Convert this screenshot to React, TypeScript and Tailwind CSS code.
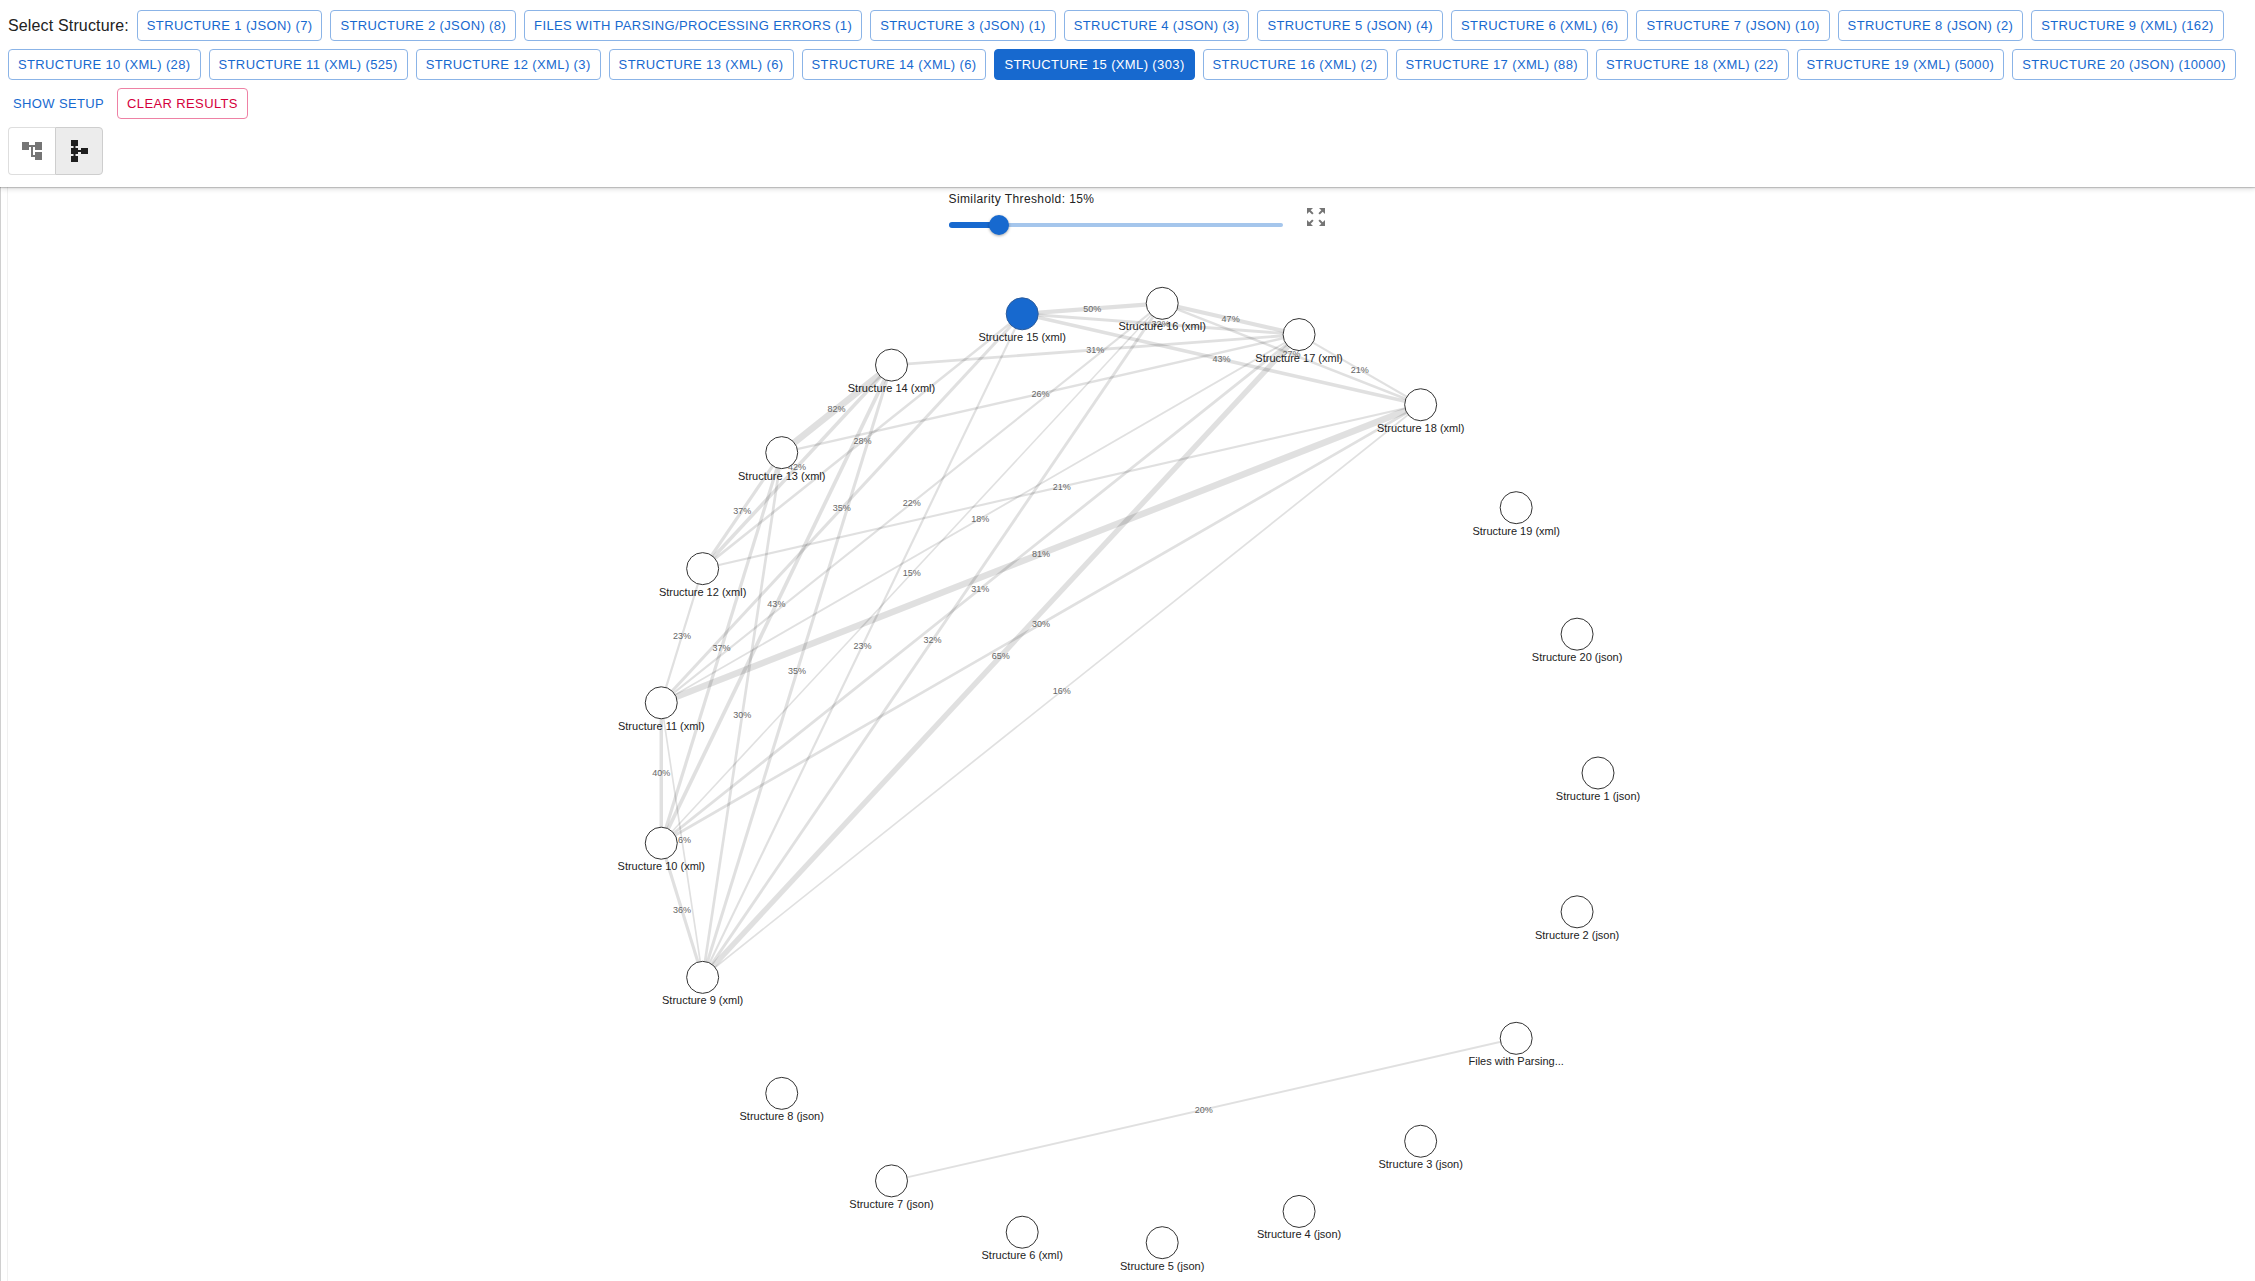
import { useState } from "react";

const structures = [
  { name: "Structure 1 (json)", count: 7 },
  { name: "Structure 2 (json)", count: 8 },
  { name: "Files with Parsing/Processing Errors", short: "Files with Parsing...", count: 1 },
  { name: "Structure 3 (json)", count: 1 },
  { name: "Structure 4 (json)", count: 3 },
  { name: "Structure 5 (json)", count: 4 },
  { name: "Structure 6 (xml)", count: 6 },
  { name: "Structure 7 (json)", count: 10 },
  { name: "Structure 8 (json)", count: 2 },
  { name: "Structure 9 (xml)", count: 162 },
  { name: "Structure 10 (xml)", count: 28 },
  { name: "Structure 11 (xml)", count: 525 },
  { name: "Structure 12 (xml)", count: 3 },
  { name: "Structure 13 (xml)", count: 6 },
  { name: "Structure 14 (xml)", count: 6 },
  { name: "Structure 15 (xml)", count: 303 },
  { name: "Structure 16 (xml)", count: 2 },
  { name: "Structure 17 (xml)", count: 88 },
  { name: "Structure 18 (xml)", count: 22 },
  { name: "Structure 19 (xml)", count: 5000 },
  { name: "Structure 20 (json)", count: 10000 },
];

// [source index, target index, similarity in percent]
const links: [number, number, number][] = [
  [2, 7, 20],
  [9, 10, 36],
  [9, 11, 16],
  [9, 13, 30],
  [9, 14, 35],
  [9, 15, 23],
  [9, 16, 32],
  [9, 17, 65],
  [9, 18, 16],
  [10, 11, 40],
  [10, 13, 37],
  [10, 14, 43],
  [10, 16, 15],
  [10, 17, 31],
  [10, 18, 30],
  [11, 12, 23],
  [11, 15, 35],
  [11, 16, 22],
  [11, 17, 18],
  [11, 18, 81],
  [12, 13, 37],
  [12, 14, 42],
  [12, 15, 28],
  [12, 18, 21],
  [13, 14, 82],
  [13, 17, 26],
  [14, 17, 31],
  [15, 16, 50],
  [15, 17, 32],
  [15, 18, 43],
  [16, 17, 47],
  [16, 18, 27],
  [17, 18, 21],
];

const WIDTH = 1100;
const HEIGHT = 1032;
const RADIUS = 471;
const NODE = 16;

const points = structures.map((_, i) => {
  const a = (i * 2 * Math.PI) / structures.length;
  return { x: WIDTH / 2 + RADIUS * Math.cos(a), y: HEIGHT / 2 + RADIUS * Math.sin(a) };
});

function Graph({ selected, threshold, onSelect }: { selected: number; threshold: number; onSelect: (i: number) => void }) {
  const visible = links.filter((l) => l[2] >= threshold);
  return (
    <svg width={WIDTH} height={HEIGHT} viewBox={`0 0 ${WIDTH} ${HEIGHT}`} className="mt-[22px] block shrink-0" role="img" aria-label="Structure similarity graph">
      {visible.map(([a, b, s]) => (
        <g key={`${a}-${b}`}>
          <line x1={points[a].x} y1={points[a].y} x2={points[b].x} y2={points[b].y} stroke="#000" strokeOpacity={0.12} strokeWidth={0.5 + (s / 100) * 7.5} />
          <text x={(points[a].x + points[b].x) / 2} y={(points[a].y + points[b].y) / 2 + 3} textAnchor="middle" fill="#666" className="text-[9px]">
            {s}%
          </text>
        </g>
      ))}
      {structures.map((n, i) => (
        <g key={n.name} className="cursor-pointer" onClick={() => onSelect(i)}>
          <circle cx={points[i].x} cy={points[i].y} r={NODE} fill={i === selected ? "#1769cf" : "#fff"} stroke={i === selected ? "#2c5c9c" : "#333"} strokeWidth={1} />
          <text x={points[i].x} y={points[i].y + 27} textAnchor="middle" fill="#222" className="text-[11px]">
            {n.short ?? n.name}
          </text>
        </g>
      ))}
    </svg>
  );
}

export default function App() {
  const [selected, setSelected] = useState(15);
  const [threshold, setThreshold] = useState(15);
  const [view, setView] = useState("graph");
  const button = "h-[31px] rounded border px-[9px] text-[13px] tracking-[0.02857em] uppercase whitespace-nowrap";

  return (
    <div className="flex h-screen flex-col overflow-hidden bg-white font-['Liberation_Sans',sans-serif] text-[#222]">
      <header className="relative z-10 bg-white px-2 pt-[10px] pb-3 shadow-[0_1px_1px_rgba(0,0,0,0.18),0_2px_5px_rgba(0,0,0,0.14)]">
        <div className="flex flex-wrap items-center gap-2">
          <h1 className="text-base leading-6 tracking-[0.00938em]">Select Structure:</h1>
          {structures.map((s, i) => (
            <button
              key={s.name}
              onClick={() => setSelected(i)}
              className={`${button} ${i === selected ? "border-[#1769cf] bg-[#1769cf] text-white" : "border-[#8bb4e7] text-[#1769cf]"}`}
            >
              {s.name} ({s.count})
            </button>
          ))}
          <button className="h-[31px] px-[5px] text-[13px] tracking-[0.02857em] text-[#1769cf] uppercase">Show setup</button>
          <button className={`${button} border-[#ee81a5] text-[#d5003c]`}>Clear results</button>
        </div>
        <div className="mt-2 flex" role="group" aria-label="View">
          <button
            aria-label="Tree view"
            aria-pressed={view === "tree"}
            onClick={() => setView("tree")}
            className="flex h-12 w-[47px] items-center justify-center rounded-l border border-r-0 border-[#dedede] text-[#757575]"
          >
            <svg viewBox="0 0 24 24" className="size-6" fill="currentColor">
              <path d="M22 11V3h-7v3H9V3H2v8h7V8h2v10h4v3h7v-8h-7v3h-2V8h2v3z" />
            </svg>
          </button>
          <button
            aria-label="Graph view"
            aria-pressed={view === "graph"}
            onClick={() => setView("graph")}
            className="flex size-12 items-center justify-center rounded-r border border-[#cecece] bg-[#ececec] text-[#1e1e1e]"
          >
            <svg viewBox="0 0 24 24" className="size-6" fill="currentColor">
              <path d="M4 1h7v6H8.500v2H11v2h3V9h7v6h-7v-2h-3v2H8.500v2H11v6H4v-6h2.500v-2H4V9h2.500V7H4z" />
            </svg>
          </button>
        </div>
      </header>
      <main className="relative flex min-h-0 flex-1 flex-col items-center border-l border-[#cfcfcf] pr-[2px]">
        <div className="absolute inset-y-0 left-[6px] w-px bg-[#f0f0f0]" />
        <div className="flex items-start gap-[15px] pt-[2px] pl-7">
          <div className="flex w-[334px] flex-col">
            <label htmlFor="threshold" className="text-xs leading-5 tracking-[0.03333em]">
              Similarity Threshold: {threshold}%
            </label>
            <div className="relative mt-[6px] flex h-5 items-center">
              <div className="h-1 w-full rounded-full bg-[#a5c6ec]" />
              <div className="absolute left-0 h-[6px] rounded-full bg-[#1769cf]" style={{ width: `${threshold}%` }} />
              <input
                id="threshold"
                type="range"
                min={0}
                max={100}
                value={threshold}
                onChange={(e) => setThreshold(Number(e.target.value))}
                className="absolute -inset-x-[10px] h-5 appearance-none bg-transparent [&::-webkit-slider-thumb]:size-5 [&::-webkit-slider-thumb]:appearance-none [&::-webkit-slider-thumb]:rounded-full [&::-webkit-slider-thumb]:bg-[#1769cf] [&::-webkit-slider-thumb]:shadow-[0_1px_3px_rgba(0,0,0,0.35)]"
              />
            </div>
          </div>
          <button aria-label="Full screen" className="mt-[10px] flex size-9 items-center justify-center text-[#757575]">
            <svg viewBox="0 0 24 24" className="size-6" fill="currentColor">
              <path d="m15 3 2.300 2.300-2.890 2.870 1.420 1.420L18.700 6.700 21 9V3zM3 9l2.300-2.300 2.870 2.890 1.420-1.420L6.700 5.300 9 3H3zm6 12-2.300-2.300 2.890-2.870-1.420-1.420L5.300 17.300 3 15v6zm12-6-2.300 2.300-2.870-2.890-1.420 1.420 2.890 2.870L15 21h6z" />
            </svg>
          </button>
        </div>
        <Graph selected={selected} threshold={threshold} onSelect={setSelected} />
      </main>
    </div>
  );
}
